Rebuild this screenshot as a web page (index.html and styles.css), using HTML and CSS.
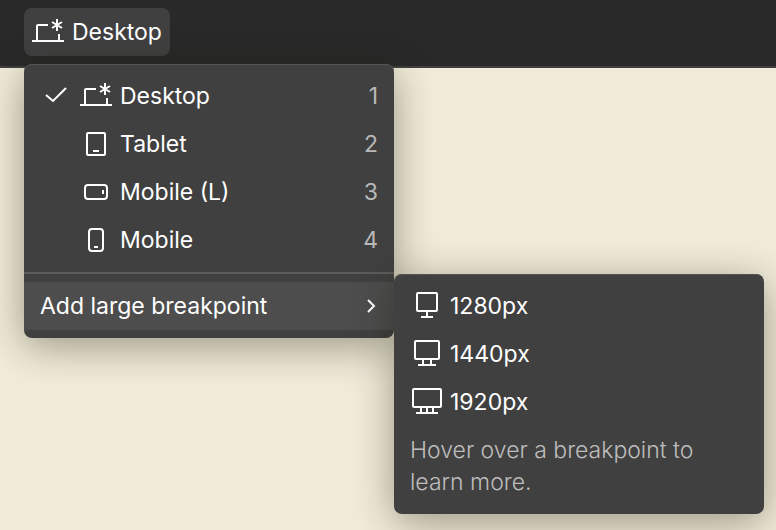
FILE: index.html
```html
<!DOCTYPE html>
<html lang="en">

<head>
    <meta charset="UTF-8">
    <meta name="viewport" content="width=device-width, initial-scale=1.0">
    <title>Breakpoints</title>
    <link rel="stylesheet" href="styles.css">
</head>

<body>

    <header class="topbar">
        <div class="picker">
            <button class="picker-button" type="button" aria-haspopup="menu" aria-expanded="true">
                <svg class="icon" viewBox="0 0 32 32">
                    <path d="M16 9H6Q5 9 5 10V25M27 18v7M0 25h32" />
                    <path d="M25 3v12M20 6l10 6M30 6l-10 6" />
                </svg>
                <span>Desktop</span>
            </button>

            <div class="menu">
                <button class="item" type="button">
                    <svg class="icon check" viewBox="0 0 32 32">
                        <path d="M6 15l7 6L26 8" />
                    </svg>
                    <svg class="icon" viewBox="0 0 32 32">
                        <path d="M16 9H6Q5 9 5 10V25M27 18v7M0 25h32" />
                        <path d="M25 3v12M20 6l10 6M30 6l-10 6" />
                    </svg>
                    <span>Desktop</span>
                    <span class="key">1</span>
                </button>
                <button class="item indent" type="button">
                    <svg class="icon" viewBox="0 0 32 32">
                        <rect x="7" y="5" width="18" height="22" rx="1" />
                        <path d="M13 23h6" />
                    </svg>
                    <span>Tablet</span>
                    <span class="key">2</span>
                </button>
                <button class="item indent" type="button">
                    <svg class="icon" viewBox="0 0 32 32">
                        <rect x="5" y="9" width="22" height="14" rx="3" />
                        <path d="M23 14v4" />
                    </svg>
                    <span>Mobile (L)</span>
                    <span class="key">3</span>
                </button>
                <button class="item indent" type="button">
                    <svg class="icon" viewBox="0 0 32 32">
                        <rect x="9" y="5" width="14" height="22" rx="3" />
                        <path d="M14 23h4" />
                    </svg>
                    <span>Mobile</span>
                    <span class="key">4</span>
                </button>

                <hr class="divider">

                <div class="submenu-wrap">
                    <button class="item active" type="button" aria-haspopup="menu" aria-expanded="true">
                        <span>Add large breakpoint</span>
                        <svg class="chevron" viewBox="0 0 16 16">
                            <path d="M6 2l6 6-6 6" />
                        </svg>
                    </button>

                    <div class="menu submenu">
                        <button class="item" type="button">
                            <svg class="icon" viewBox="0 0 32 32">
                                <rect x="7" y="3" width="20" height="18" rx="1" />
                                <path d="M17 21v6M11 27h12" />
                            </svg>
                            <span>1280px</span>
                        </button>
                        <button class="item" type="button">
                            <svg class="icon" viewBox="0 0 32 32">
                                <rect x="5" y="3" width="24" height="18" rx="1" />
                                <path d="M13 21v6M21 21v6M8 27h18" />
                            </svg>
                            <span>1440px</span>
                        </button>
                        <button class="item" type="button">
                            <svg class="icon" viewBox="0 0 32 32">
                                <rect x="3" y="3" width="28" height="18" rx="1" />
                                <path d="M11 21v6M17 21v6M23 21v6M6 27h22" />
                            </svg>
                            <span>1920px</span>
                        </button>
                        <p class="hint">Hover over a breakpoint to learn more.</p>
                    </div>
                </div>
            </div>
        </div>
    </header>

</body>

</html>
```

FILE: styles.css
```css
* {
    box-sizing: border-box;
}

body {
    margin: 0;
    min-height: 100vh;
    background-color: #f2ebd9;
    color: #fff;
    font-family: Inter, "Liberation Sans", sans-serif;
    font-size: 23px;
    line-height: 32px;
}

button {
    border: none;
    background: none;
    color: inherit;
    font: inherit;
    text-align: left;
    cursor: pointer;
}

.topbar {
    padding: 8px 24px 10px;
    background-color: #292929;
    border-bottom: 2px solid #404040;
}

.picker {
    position: relative;
    display: inline-block;
    vertical-align: top;
}

.picker-button {
    display: flex;
    align-items: center;
    gap: 8px;
    padding: 8px;
    background-color: #404040;
    border-radius: 8px;
}

.icon {
    flex: none;
    width: 32px;
    height: 32px;
}

.icon,
.chevron {
    fill: none;
    stroke: #fff;
    stroke-width: 2;
}

.menu {
    position: absolute;
    top: 56px;
    left: 0;
    width: 370px;
    padding: 8px 0;
    background-color: #404040;
    border-radius: 8px;
    box-shadow: 0 8px 40px rgba(20, 25, 0, 0.4), inset 0 1px 0 #545454;
}

.item {
    display: flex;
    align-items: center;
    gap: 8px;
    width: 100%;
    padding: 8px 16px;
}

.item:hover,
.item.active {
    background-color: #4d4d4d;
}

.item.indent {
    padding-left: 56px;
}

.key {
    margin-left: auto;
    color: #b8b8b8;
}

.chevron {
    width: 16px;
    height: 16px;
    margin-left: auto;
}

.divider {
    height: 2px;
    margin: 8px 0;
    border: none;
    background-color: #5c5c5c;
}

.submenu-wrap {
    position: relative;
}

/* opens to the right, first row level with its parent */
.submenu {
    top: -8px;
    left: 100%;
}

.hint {
    margin: 0;
    padding: 8px 16px;
    color: #bdbdbd;
    font-weight: 300;
}
```
